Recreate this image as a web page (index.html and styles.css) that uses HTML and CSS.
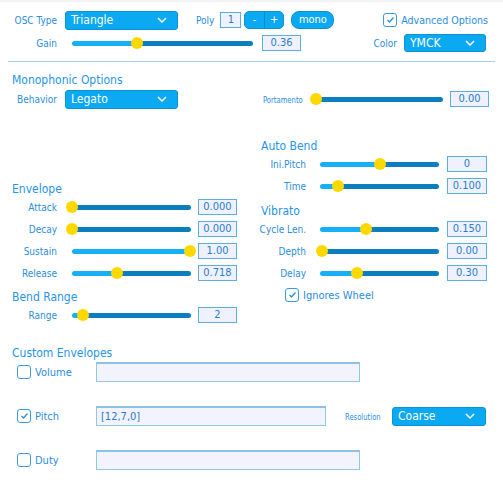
FILE: index.html
```html
<!DOCTYPE html>
<html lang="en">
    <head>
        <meta charset="UTF-8" />
        <title>Instrument Editor</title>
        <link rel="stylesheet" href="styles.css">
    </head>
    <body>
        <!-- Top options -->
        <div class="row top-row">
            <span class="lbl">OSC Type</span>
            <div class="select osc-select">Triangle<svg width="10" height="6" viewBox="0 0 10 6"><path d="M1 1l4 4 4-4" fill="none" stroke="#fff" stroke-width="1.5"/></svg></div>
            <span class="lbl auto poly-lbl">Poly</span>
            <div class="num poly-num">1</div>
            <div class="btn-group"><span>-</span><span>+</span></div>
            <span class="btn pill">mono</span>
            <label class="check adv"><span class="box"><svg width="9" height="8" viewBox="0 0 9 8"><path d="M1.5 4l2 2 4-4.5" fill="none" stroke="#2a8fe0" stroke-width="1.3"/></svg></span>Advanced Options</label>
        </div>
        <div class="row gain-row">
            <span class="lbl">Gain</span>
            <div class="slider gain-slider" style="--v:36%"><span class="thumb"></span></div>
            <div class="num gain-num">0.36</div>
            <span class="lbl auto color-lbl">Color</span>
            <div class="select color-select">YMCK<svg width="10" height="6" viewBox="0 0 10 6"><path d="M1 1l4 4 4-4" fill="none" stroke="#fff" stroke-width="1.5"/></svg></div>
        </div>

        <hr class="divider">

        <!-- Monophonic -->
        <h3 class="mono-title">Monophonic Options</h3>
        <div class="row behavior-row">
            <span class="lbl">Behavior</span>
            <div class="select osc-select">Legato<svg width="10" height="6" viewBox="0 0 10 6"><path d="M1 1l4 4 4-4" fill="none" stroke="#fff" stroke-width="1.5"/></svg></div>
            <span class="narrow porta-lbl"><span>Portamento</span></span>
            <div class="slider porta-slider" style="--v:0%"><span class="thumb"></span></div>
            <div class="num porta-num">0.00</div>
        </div>

        <div class="columns">
            <div class="col left">
                <h3>Envelope</h3>
                <div class="row srow"><span class="lbl">Attack</span><div class="slider" style="--v:0%"><span class="thumb"></span></div><div class="num">0.000</div></div>
                <div class="row srow"><span class="lbl">Decay</span><div class="slider" style="--v:0%"><span class="thumb"></span></div><div class="num">0.000</div></div>
                <div class="row srow"><span class="lbl">Sustain</span><div class="slider" style="--v:99%"><span class="thumb"></span></div><div class="num">1.00</div></div>
                <div class="row srow"><span class="lbl">Release</span><div class="slider" style="--v:38%"><span class="thumb"></span></div><div class="num">0.718</div></div>
                <h3 class="sub">Bend Range</h3>
                <div class="row srow"><span class="lbl">Range</span><div class="slider" style="--v:9%"><span class="thumb"></span></div><div class="num">2</div></div>
            </div>
            <div class="col right">
                <h3>Auto Bend</h3>
                <div class="row srow"><span class="lbl">Ini.Pitch</span><div class="slider" style="--v:50%"><span class="thumb"></span></div><div class="num">0</div></div>
                <div class="row srow"><span class="lbl">Time</span><div class="slider" style="--v:15%"><span class="thumb"></span></div><div class="num">0.100</div></div>
                <h3 class="sub">Vibrato</h3>
                <div class="row srow"><span class="lbl">Cycle Len.</span><div class="slider" style="--v:39%"><span class="thumb"></span></div><div class="num">0.150</div></div>
                <div class="row srow"><span class="lbl">Depth</span><div class="slider" style="--v:2%"><span class="thumb"></span></div><div class="num">0.00</div></div>
                <div class="row srow"><span class="lbl">Delay</span><div class="slider" style="--v:31%"><span class="thumb"></span></div><div class="num">0.30</div></div>
                <label class="check wheel"><span class="box"><svg width="9" height="8" viewBox="0 0 9 8"><path d="M1.5 4l2 2 4-4.5" fill="none" stroke="#2a8fe0" stroke-width="1.3"/></svg></span>Ignores Wheel</label>
            </div>
        </div>

        <!-- Custom envelopes -->
        <h3 class="custom-title">Custom Envelopes</h3>
        <div class="row env-row first">
            <label class="check env-check"><span class="box"></span>Volume</label>
            <div class="field">&nbsp;</div>
        </div>
        <div class="row env-row">
            <label class="check env-check"><span class="box"><svg width="9" height="8" viewBox="0 0 9 8"><path d="M1.5 4l2 2 4-4.5" fill="none" stroke="#2a8fe0" stroke-width="1.3"/></svg></span>Pitch</label>
            <div class="field short">[12,7,0]</div>
            <span class="narrow res-lbl"><span>Resolution</span></span>
            <div class="select res-select">Coarse<svg width="10" height="6" viewBox="0 0 10 6"><path d="M1 1l4 4 4-4" fill="none" stroke="#fff" stroke-width="1.5"/></svg></div>
        </div>
        <div class="row env-row">
            <label class="check env-check"><span class="box"></span>Duty</label>
            <div class="field">&nbsp;</div>
        </div>
    </body>
</html>
```

FILE: styles.css
```css
body {
    margin: 0;
    border-top: 2px solid #f3f3f3;
    background: #fff;
    color: #2a8de0;
    font-family: "DejaVu Sans Condensed", "DejaVu Sans", sans-serif;
}

.row {
    display: flex;
    align-items: center;
}

.lbl {
    flex: none;
    width: 57px;
    text-align: right;
    font-size: 10px;
}

.lbl.auto {
    width: auto;
}

/* tiny squeezed labels */
.narrow {
    flex: none;
    width: 39px;
    font-size: 9.5px;
    white-space: nowrap;
}

.narrow span {
    display: inline-block;
    transform: scaleX(0.8);
    transform-origin: left center;
}

h3 {
    margin: 0;
    padding-left: 12px;
    font-size: 12px;
    font-weight: normal;
    line-height: 14px;
    color: #2594ea;
}

/* selects and buttons */
.select {
    box-sizing: border-box;
    display: flex;
    align-items: center;
    justify-content: space-between;
    flex: none;
    height: 19px;
    padding: 0 10px 0 5px;
    background-color: #0aa9f2;
    border: 1px solid #0b93d4;
    border-radius: 3px;
    color: #fff;
    font-size: 12px;
}

.osc-select {
    margin-left: 8px;
    width: 113px;
}

.color-select {
    margin-left: 7px;
    margin-right: 17px;
    width: 82px;
    height: 18px;
}

.res-select {
    margin-left: 8px;
    width: 94px;
}

.btn-group {
    display: flex;
    flex: none;
    margin-left: 3px;
    width: 40px;
    height: 18px;
    box-sizing: border-box;
    background-color: #0aa9f2;
    border: 1px solid #0b93d4;
    border-radius: 5px;
    color: #fff;
    font-size: 11px;
}

.btn-group span {
    flex: 1;
    text-align: center;
    line-height: 16px;
}

.btn-group span + span {
    border-left: 1px solid #0a86c6;
}

.btn.pill {
    flex: none;
    margin-left: 7px;
    width: 43px;
    height: 18px;
    box-sizing: border-box;
    background-color: #0aa9f2;
    border: 1px solid #0b93d4;
    border-radius: 8px;
    color: #fff;
    font-size: 11px;
    text-align: center;
    line-height: 16px;
}

/* value boxes */
.num {
    flex: none;
    box-sizing: border-box;
    width: 39px;
    height: 16px;
    background-color: #eff2fc;
    border: 1px solid #5aaee0;
    color: #2a7dd0;
    font-size: 11px;
    line-height: 14px;
    text-align: center;
}

/* sliders */
.slider {
    position: relative;
    flex: none;
    height: 5px;
    border-radius: 3px;
    background: linear-gradient(to right, #16b0f6 var(--v), #0b7fbe var(--v));
}

.slider .thumb {
    position: absolute;
    left: var(--v);
    top: 50%;
    width: 12px;
    height: 12px;
    border-radius: 50%;
    background-color: #ffd800;
    transform: translate(-50%, -50%);
}

/* checkboxes */
.check {
    display: flex;
    align-items: center;
    gap: 4px;
    font-size: 11px;
}

.box {
    box-sizing: border-box;
    display: flex;
    align-items: center;
    justify-content: center;
    width: 14px;
    height: 14px;
    background: #fff;
    border: 1.5px solid #3a9ae6;
    border-radius: 3px;
}

/* top area */
.top-row {
    height: 20px;
    margin-top: 8px;
}

.poly-lbl {
    margin-left: 18px;
}

.poly-num {
    margin-left: 6px;
    width: 21px;
}

.adv {
    margin-left: auto;
    margin-right: 15px;
    font-size: 10.6px;
}

.gain-row {
    height: 18px;
    margin-top: 4px;
}

.gain-slider {
    margin-left: 15px;
    width: 181px;
}

.gain-num {
    margin-left: 9px;
}

.color-lbl {
    margin-left: auto;
}

.divider {
    margin: 9px 8px 0;
    border: 0;
    border-top: 1px solid #a0d0ee;
}

.mono-title {
    margin-top: 11px;
}

.behavior-row {
    height: 18px;
    margin-top: 3px;
}

.porta-lbl {
    margin-left: 85px;
}

.porta-slider {
    margin-left: 14px;
    width: 127px;
}

.porta-num {
    margin-left: 7px;
}

/* two columns */
.columns {
    display: flex;
    align-items: flex-start;
    margin-top: 31px;
}

.col {
    width: 250px;
}

.col.left {
    padding-top: 43px;
}

.col.right h3 {
    padding-left: 11px;
}

.srow {
    height: 22px;
}

.col.left .slider {
    margin-left: 15px;
    width: 119px;
}

.col.left .num {
    margin-left: 7px;
}

.col.right .lbl {
    width: 56px;
}

.col.right .slider {
    margin-left: 14px;
    width: 119px;
}

.col.right .num {
    margin-left: 8px;
    width: 40px;
}

h3.sub {
    margin-top: 7px;
}

.col.left h3.sub {
    margin-top: 6px;
}

.wheel {
    height: 20px;
    margin-top: 1px;
    padding-left: 35px;
}

/* custom envelopes */
.custom-title {
    margin-top: 20px;
}

.env-row {
    height: 20px;
    margin-top: 24px;
    padding-left: 17px;
}

.env-row.first {
    margin-top: 2px;
}

.env-check {
    width: 79px;
    flex: none;
}

.field {
    flex: none;
    box-sizing: border-box;
    width: 264px;
    height: 20px;
    padding-left: 4px;
    background-color: #f2f3fc;
    border: 1px solid #8fc9e8;
    border-top: 2px solid #8cc3e2;
    color: #2a7dd0;
    font-size: 11px;
    line-height: 17px;
}

.field.short {
    width: 230px;
}

.res-lbl {
    margin-left: 19px;
}
```
